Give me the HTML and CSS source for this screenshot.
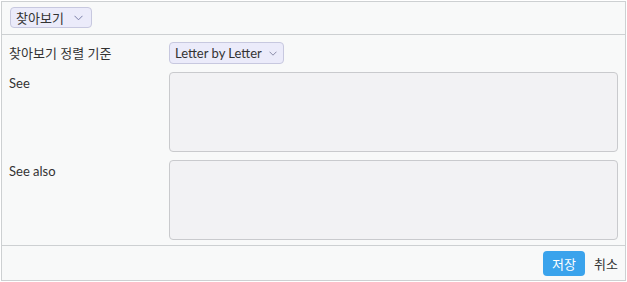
FILE: index.html
```html
<!DOCTYPE html>
<html lang="ko">
<head>
<meta charset="utf-8">
<link rel="stylesheet" href="styles.css">
</head>
<body>
<div class="panel">
  <div class="toolbar">
    <button class="dd dd-main">찾아보기<svg class="chev" width="9" height="6" viewBox="0 0 9 6"><path d="M0.5 0.8 L4.5 4.8 L8.5 0.8" fill="none" stroke="#7b7fa8" stroke-width="1"/></svg></button>
  </div>
  <div class="form">
    <div class="row">
      <div class="label">찾아보기 정렬 기준</div>
      <div class="field"><button class="dd dd-sel">Letter by Letter<svg class="chev" width="8" height="5" viewBox="0 0 8 5"><path d="M0.5 0.7 L4 4.2 L7.5 0.7" fill="none" stroke="#8a8ca8" stroke-width="1"/></svg></button></div>
    </div>
    <div class="row">
      <div class="label">See</div>
      <div class="field"><textarea class="ta"></textarea></div>
    </div>
    <div class="row">
      <div class="label">See also</div>
      <div class="field"><textarea class="ta"></textarea></div>
    </div>
  </div>
  <div class="footer">
    <button class="save">저장</button>
    <button class="cancel">취소</button>
  </div>
</div>
</body>
</html>
```
FILE: styles.css
```css
html, body { margin: 0; padding: 0; background: #fff; }
body { padding: 1px; }
.panel {
  width: 625px;
  height: 280px;
  box-sizing: border-box;
  border: 1px solid #cdd0d2;
  background: #f8f9f9;
  display: flex;
  flex-direction: column;
  font-family: Lato, "Noto Sans CJK KR", sans-serif;
  font-size: 13px;
  color: #333;
}
.toolbar {
  padding: 5px 8px 6px 8px;
  border-bottom: 1px solid #cdd0d2;
  display: flex;
}
.dd {
  font: inherit;
  color: #333;
  background: #ebebfa;
  border: 1px solid #c7c8df;
  border-radius: 4px;
  display: flex;
  align-items: center;
  margin: 0;
  box-sizing: border-box;
}
.dd-main { height: 21px; width: 82px; padding: 0 0 0 5px; }
.dd-main .chev { margin-left: 10px; }
.dd-sel { height: 22px; width: 115px; padding: 0 0 0 5px; }
.dd-sel .chev { margin-left: 7px; }
.form {
  flex: 1;
  padding: 7px 7px 5px 7px;
  display: flex;
  flex-direction: column;
  gap: 8px;
  border-bottom: 1px solid #cdd0d2;
}
.row { display: flex; }
.label { width: 160px; line-height: 22px; flex: none; }
.field { flex: 1; display: flex; }
.ta {
  flex: 1;
  height: 80px;
  box-sizing: border-box;
  background: #f2f2f4;
  border: 1px solid #c9cacd;
  border-radius: 4px;
  resize: none;
  margin: 0;
}
.footer {
  flex: 1;
  display: flex;
  align-items: center;
  justify-content: flex-end;
  padding: 0 7px 0 0;
  gap: 9px;
}
.save {
  font: inherit;
  color: #fff;
  background: #3aa3ec;
  border: none;
  border-radius: 4px;
  width: 42px;
  height: 25px;
  padding: 0;
  margin: 0;
}
.cancel {
  font: inherit;
  color: #333;
  background: none;
  border: none;
  padding: 0;
  margin: 0;
}
```
